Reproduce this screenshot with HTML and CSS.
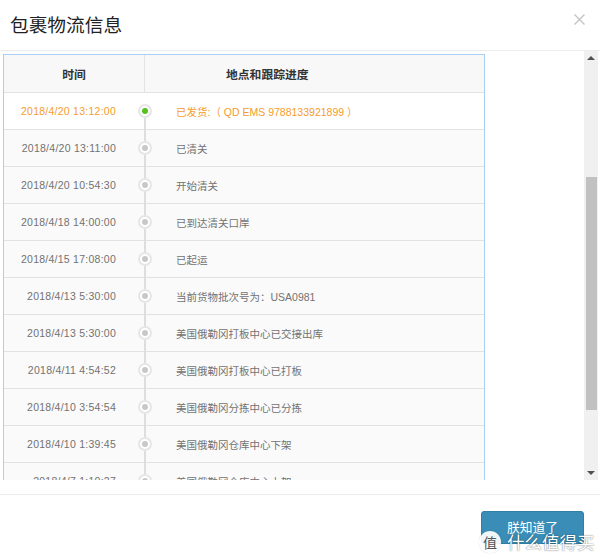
FILE: index.html
```html
<!DOCTYPE html>
<html lang="zh-CN">
<head>
<meta charset="utf-8">
<title>包裹物流信息</title>
<link rel="stylesheet" href="styles.css">
</head>
<body>
<div class="modal">
  <div class="modal-header">
    <h1 class="title">包裹物流信息</h1>
    <svg class="close" width="11" height="11" viewBox="0 0 11 11"><path d="M0.5 0.5 L10.5 10.5 M10.5 0.5 L0.5 10.5" stroke="#c4c4c4" stroke-width="1.4" fill="none"/></svg>
  </div>
  <div class="modal-body">
    <div class="scroll">
      <div class="table">
        <div class="thead">
          <div class="th th-time">时间</div>
          <div class="th th-info">地点和跟踪进度</div>
        </div>
        <div class="row first current">
          <div class="time">2018/4/20 13:12:00</div>
          <div class="node"><span class="dot"><span class="core"></span></span></div>
          <div class="info">已发货:（ QD EMS 9788133921899 ）</div>
        </div>
        <div class="row">
          <div class="time">2018/4/20 13:11:00</div>
          <div class="node"><span class="dot"><span class="core"></span></span></div>
          <div class="info">已清关</div>
        </div>
        <div class="row">
          <div class="time">2018/4/20 10:54:30</div>
          <div class="node"><span class="dot"><span class="core"></span></span></div>
          <div class="info">开始清关</div>
        </div>
        <div class="row">
          <div class="time">2018/4/18 14:00:00</div>
          <div class="node"><span class="dot"><span class="core"></span></span></div>
          <div class="info">已到达清关口岸</div>
        </div>
        <div class="row">
          <div class="time">2018/4/15 17:08:00</div>
          <div class="node"><span class="dot"><span class="core"></span></span></div>
          <div class="info">已起运</div>
        </div>
        <div class="row">
          <div class="time">2018/4/13 5:30:00</div>
          <div class="node"><span class="dot"><span class="core"></span></span></div>
          <div class="info">当前货物批次号为：USA0981</div>
        </div>
        <div class="row">
          <div class="time">2018/4/13 5:30:00</div>
          <div class="node"><span class="dot"><span class="core"></span></span></div>
          <div class="info">美国俄勒冈打板中心已交接出库</div>
        </div>
        <div class="row">
          <div class="time">2018/4/11 4:54:52</div>
          <div class="node"><span class="dot"><span class="core"></span></span></div>
          <div class="info">美国俄勒冈打板中心已打板</div>
        </div>
        <div class="row">
          <div class="time">2018/4/10 3:54:54</div>
          <div class="node"><span class="dot"><span class="core"></span></span></div>
          <div class="info">美国俄勒冈分拣中心已分拣</div>
        </div>
        <div class="row">
          <div class="time">2018/4/10 1:39:45</div>
          <div class="node"><span class="dot"><span class="core"></span></span></div>
          <div class="info">美国俄勒冈仓库中心下架</div>
        </div>
        <div class="row">
          <div class="time">2018/4/7 1:10:27</div>
          <div class="node"><span class="dot"><span class="core"></span></span></div>
          <div class="info">美国俄勒冈仓库中心上架</div>
        </div>
        <div class="row">
          <div class="time">2018/4/7 1:00:00</div>
          <div class="node"><span class="dot"><span class="core"></span></span></div>
          <div class="info">美国俄勒冈仓库已入库</div>
        </div>
      </div>
    </div>
    <div class="scrollbar">
      <div class="arrow up"></div>
      <div class="track"><div class="thumb"></div></div>
      <div class="arrow down"></div>
    </div>
  </div>
  <div class="modal-footer">
    <button class="btn">朕知道了</button>
  </div>
  <div class="watermark"><span class="wm-logo">值</span><span class="wm-text">什么值得买</span></div>
</div>
</body>
</html>
```

FILE: styles.css
```css
html, body {
  margin: 0;
  padding: 0;
  background: #fff;
}
body {
  font-family: "Liberation Sans", "Noto Sans CJK SC", sans-serif;
  color: #333;
}
.modal {
  position: relative;
  width: 600px;
  height: 559px;
  overflow: hidden;
  background: #fff;
}
.modal-header {
  height: 51px;
  border-bottom: 1px solid #ececec;
  display: flex;
  align-items: center;
  justify-content: space-between;
  padding: 0 15px 0 10px;
  box-sizing: border-box;
}
.title {
  margin: 0;
  font-family: "Noto Sans CJK SC", sans-serif;
  font-size: 18.7px;
  font-weight: normal;
  color: #222;
  line-height: 24px;
  margin-top: -2px;
}
.close {
  margin-top: -12px;
}
.modal-body {
  display: flex;
  height: 429px;
  padding-right: 2px;
}
.scroll {
  flex: 1;
  overflow: hidden;
}
.table {
  margin: 3px 0 0 3px;
  width: 482px;
  box-sizing: border-box;
  border: 1px solid #a9cdf3;
  border-bottom: none;
}
.thead {
  display: grid;
  grid-template-columns: 141px 1fr;
  height: 38px;
  background: #f8f8f8;
  border-bottom: 1px solid #e3e3e3;
  box-sizing: border-box;
}
.th {
  display: flex;
  align-items: center;
  justify-content: center;
  font-family: "Noto Sans CJK SC", sans-serif;
  font-size: 11.8px;
  font-weight: bold;
  color: #333;
}
.th-time {
  border-right: 1px solid #e3e3e3;
}
.th-info {
  justify-content: flex-start;
  padding-left: 81px;
}
.row {
  display: grid;
  grid-template-columns: 128px 26px 1fr;
  height: 37px;
  border-bottom: 1px solid #e2e2e2;
  box-sizing: border-box;
  background: #fafafa;
  font-size: 10.5px;
  color: #727272;
}
.row.first {
  background: #fff;
}
.time {
  display: flex;
  align-items: center;
  justify-content: flex-end;
  padding-right: 16px;
  letter-spacing: 0.25px;
}
.info {
  display: flex;
  align-items: center;
  padding-left: 18px;
}
.current {
  color: #f59c2c;
}
.node {
  position: relative;
  display: flex;
  align-items: center;
  justify-content: center;
}
.node::before {
  content: "";
  position: absolute;
  left: 12px;
  width: 2px;
  top: 0;
  bottom: -1px;
  background: #dedede;
}
.first .node::before {
  top: 50%;
}
.dot {
  position: relative;
  width: 14px;
  height: 14px;
  box-sizing: border-box;
  border-radius: 50%;
  border: 2px solid #e6e6e6;
  background: #fff;
  display: flex;
  align-items: center;
  justify-content: center;
}
.core {
  width: 6px;
  height: 6px;
  border-radius: 50%;
  background: #c8c8c8;
}
.current .core {
  background: #56c21b;
}
.scrollbar {
  width: 14px;
  background: #f0f0f0;
  display: flex;
  flex-direction: column;
}
.arrow {
  height: 14px;
  display: flex;
  justify-content: center;
}
.arrow.up::after {
  content: "";
  margin-top: 5px;
  border-left: 4px solid transparent;
  border-right: 4px solid transparent;
  border-bottom: 4px solid #505050;
  height: 0;
}
.arrow.down::after {
  content: "";
  margin-top: 5px;
  border-left: 4px solid transparent;
  border-right: 4px solid transparent;
  border-top: 4px solid #505050;
  height: 0;
}
.track {
  flex: 1;
}
.thumb {
  margin: 112px 1px 0 2px;
  height: 233px;
  background: #c1c1c1;
}
.modal-footer {
  margin-top: 14px;
  border-top: 1px solid #ececec;
  display: flex;
  justify-content: flex-end;
  padding: 16px 16px 0 0;
}
.btn {
  width: 103px;
  height: 33px;
  border: 1px solid #2f7fa6;
  border-radius: 3px;
  background: #3a8db6;
  color: #fff;
  font-family: "Noto Sans CJK SC", sans-serif;
  font-size: 12.8px;
  padding: 0;
  line-height: 1;
}
.watermark {
  position: absolute;
  left: 479px;
  top: 529px;
  display: flex;
  align-items: center;
  gap: 6px;
}
.wm-logo {
  width: 22px;
  height: 22px;
  border-radius: 50%;
  background: rgba(255,255,255,0.92);
  color: #555;
  font-family: "Noto Sans CJK SC", sans-serif;
  font-size: 14px;
  display: flex;
  align-items: center;
  justify-content: center;
  box-shadow: 0 0 1px rgba(0,0,0,0.3);
}
.wm-text {
  font-family: "Noto Sans CJK SC", sans-serif;
  font-size: 17.5px;
  color: #fff;
  text-shadow: 0 0 1px rgba(0,0,0,0.5), 0 0 2px rgba(0,0,0,0.25);
}
```
